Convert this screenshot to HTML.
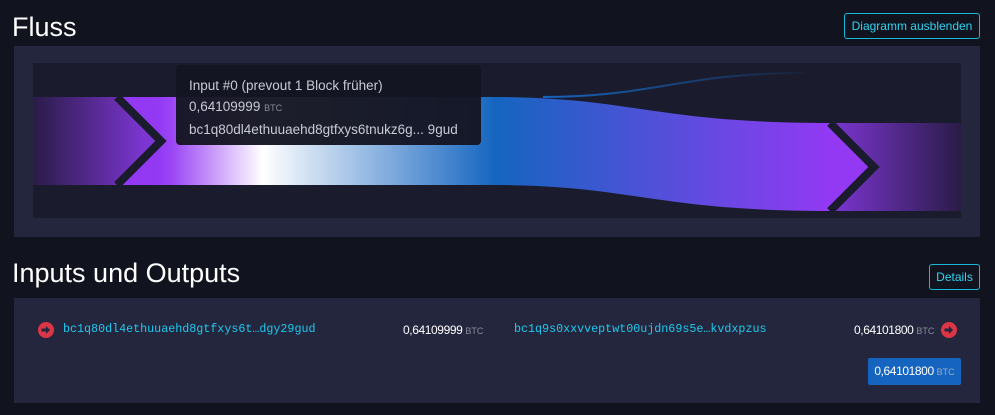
<!DOCTYPE html>
<html><head><style>
body{margin:0;width:995px;height:415px;background:#11131f;font-family:"Liberation Sans",sans-serif;position:relative;overflow:hidden;color:#fff}
.h{position:absolute;left:12px;font-size:27px;color:#fff}
.btn{position:absolute;border:1px solid #17b8d8;border-radius:3px;color:#2fd4f0;font-size:12px;box-sizing:border-box;text-align:center}
.panel{position:absolute;left:14px;width:966px;background:#24263d}
.mono{font-family:"Liberation Mono",monospace;font-size:11.7px;color:#1fc9ef;position:absolute}
.amt{position:absolute;font-size:12px;color:#fff;letter-spacing:-0.4px}
.amt span{font-size:9px;color:#8a8c99;letter-spacing:0}
.ic{position:absolute;width:16px;height:16px;border-radius:50%;background:#dc3545}
</style></head><body>
<div class="h" style="top:12px">Fluss</div>
<div class="btn" style="left:844px;top:13px;width:136px;height:26px;line-height:24px">Diagramm ausblenden</div>
<div class="panel" style="top:46px;height:191px"></div>
<svg style="position:absolute;left:33px;top:63px" width="928" height="155">
<defs>
<linearGradient id="l" gradientUnits="userSpaceOnUse" x1="0" x2="110"><stop offset="0" stop-color="#2a1c48"/><stop offset="1" stop-color="#7b35d0"/></linearGradient>
<linearGradient id="m" gradientUnits="userSpaceOnUse" x1="125" x2="800"><stop offset="0" stop-color="#9339f4"/><stop offset="0.02" stop-color="#9a45f5"/><stop offset="0.155" stop-color="#fff"/><stop offset="0.5" stop-color="#1565c0"/><stop offset="1" stop-color="#9339f4"/></linearGradient>
<linearGradient id="r" gradientUnits="userSpaceOnUse" x1="800" x2="928"><stop offset="0" stop-color="#7b35d0"/><stop offset="1" stop-color="#2a1c48"/></linearGradient>
<linearGradient id="t" gradientUnits="userSpaceOnUse" x1="510" x2="790"><stop offset="0" stop-color="#1565c0"/><stop offset="1" stop-color="#1565c0" stop-opacity="0"/></linearGradient>
</defs>
<rect width="928" height="155" fill="#1a1c2d"/>
<path d="M0 34 H84 L128 78 L84 122 H0 Z" fill="url(#l)"/>
<path d="M84 34 H460 C600 34 620 60 797 60 L841 104 L797 148 C620 148 600 122 460 122 H84 L128 78 Z" fill="url(#m)"/>
<path d="M510 34 C620 34 650 10 770 10" stroke="url(#t)" stroke-width="2" fill="none"/>
<path d="M797 60 H928 V148 H797 L841 104 Z" fill="url(#r)"/>
<path d="M84 34 L128 78 L84 122" stroke="#1a1c2d" stroke-width="8" fill="none"/>
<path d="M797 60 L841 104 L797 148" stroke="#1a1c2d" stroke-width="8" fill="none"/>
</svg>
<div style="position:absolute;left:176px;top:65px;width:305px;height:80px;background:rgba(20,21,34,0.96);border-radius:4px;color:#c8cad4;font-size:13.5px;line-height:21px;padding:10px 13px;box-sizing:border-box">Input #0 (prevout 1 Block früher)<br>0,64109999 <span style="font-size:9px;color:#8a8c99">BTC</span><br>bc1q80dl4ethuuaehd8gtfxys6tnukz6g... 9gud</div>
<div class="h" style="top:258px">Inputs und Outputs</div>
<div class="btn" style="left:929px;top:264px;width:51px;height:26px;line-height:24px">Details</div>
<div class="panel" style="top:298px;height:105px"></div>
<div class="ic" style="left:38px;top:322px"></div>
<div class="mono" style="left:63px;top:322px">bc1q80dl4ethuuaehd8gtfxys6t…dgy29gud</div>
<div class="amt" style="left:403px;top:323px">0,64109999 <span>BTC</span></div>
<div class="mono" style="left:514px;top:322px">bc1q9s0xxvveptwt00ujdn69s5e…kvdxpzus</div>
<div class="amt" style="left:854px;top:323px">0,64101800 <span>BTC</span></div>
<div class="ic" style="left:941px;top:322px"></div>
<div style="position:absolute;left:868px;top:358px;width:93px;height:27px;background:#1565c0;border-radius:2px;font-size:12px;line-height:27px;text-align:center;letter-spacing:-0.4px">0,64101800 <span style="font-size:9px;color:#9ab;letter-spacing:0">BTC</span></div>
<svg style="position:absolute;left:38px;top:322px" width="16" height="16"><path d="M3.5 6.5H8V4L12 8L8 12V9.5H3.5Z" fill="#24263d"/></svg>
<svg style="position:absolute;left:941px;top:322px" width="16" height="16"><path d="M3.5 6.5H8V4L12 8L8 12V9.5H3.5Z" fill="#24263d"/></svg>
</body></html>
